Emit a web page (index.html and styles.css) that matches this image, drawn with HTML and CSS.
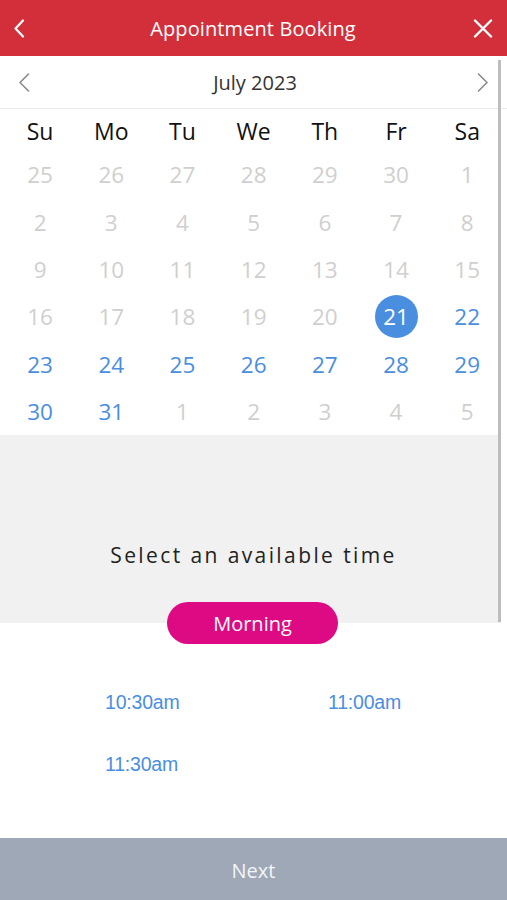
FILE: index.html
```html
<!DOCTYPE html>
<html lang="en">
<head>
<meta charset="utf-8">
<title>Appointment Booking</title>
<link rel="stylesheet" href="styles.css">
</head>
<body>
<div class="app">
  <header class="topbar">
    <button class="icon-btn back" aria-label="Back">
      <svg width="12" height="19" viewBox="0 0 12 19"><path d="M10 1.5 L2.5 9.5 L10 17.5" fill="none" stroke="#fff" stroke-width="2.2" stroke-linecap="round" stroke-linejoin="round"/></svg>
    </button>
    <h1 class="title">Appointment Booking</h1>
    <button class="icon-btn close" aria-label="Close">
      <svg width="20" height="19" viewBox="0 0 20 19"><path d="M2 1.5 L18 17.5 M18 1.5 L2 17.5" fill="none" stroke="#fff" stroke-width="2.4" stroke-linecap="round"/></svg>
    </button>
  </header>

  <div class="scroll-area">
    <section class="calendar">
      <div class="month-row">
        <span class="nav prev">
          <svg width="12" height="19" viewBox="0 0 12 19"><path d="M10.5 1 L2 9.5 L10.5 18" fill="none" stroke="#8a8a8a" stroke-width="1.6" stroke-linecap="round" stroke-linejoin="round"/></svg>
        </span>
        <span class="month">July 2023</span>
        <span class="nav next-m">
          <svg width="12" height="19" viewBox="0 0 12 19"><path d="M1.5 1 L10 9.5 L1.5 18" fill="none" stroke="#8a8a8a" stroke-width="1.6" stroke-linecap="round" stroke-linejoin="round"/></svg>
        </span>
      </div>
      <div class="grid weekdays">
        <span>Su</span><span>Mo</span><span>Tu</span><span>We</span><span>Th</span><span>Fr</span><span>Sa</span>
      </div>
      <div class="grid days">
        <span class="off">25</span><span class="off">26</span><span class="off">27</span><span class="off">28</span><span class="off">29</span><span class="off">30</span><span class="off">1</span>
        <span class="off">2</span><span class="off">3</span><span class="off">4</span><span class="off">5</span><span class="off">6</span><span class="off">7</span><span class="off">8</span>
        <span class="off">9</span><span class="off">10</span><span class="off">11</span><span class="off">12</span><span class="off">13</span><span class="off">14</span><span class="off">15</span>
        <span class="off">16</span><span class="off">17</span><span class="off">18</span><span class="off">19</span><span class="off">20</span><span class="on"><b class="sel">21</b></span><span class="on">22</span>
        <span class="on">23</span><span class="on">24</span><span class="on">25</span><span class="on">26</span><span class="on">27</span><span class="on">28</span><span class="on">29</span>
        <span class="on">30</span><span class="on">31</span><span class="off">1</span><span class="off">2</span><span class="off">3</span><span class="off">4</span><span class="off">5</span>
      </div>
    </section>
    <section class="prompt">
      <p>Select an available time</p>
    </section>
    <div class="scrollbar"></div>
  </div>

  <section class="times">
    <div class="pill-row"><span class="pill">Morning</span></div>
    <div class="slots">
      <a class="slot">10:30am</a>
      <a class="slot">11:00am</a>
      <a class="slot">11:30am</a>
    </div>
  </section>

  <footer class="next-bar">Next</footer>
</div>
</body>
</html>
```

FILE: styles.css
```css
* { box-sizing: border-box; }

html, body {
  margin: 0;
  padding: 0;
  background: #fff;
}

body {
  font-family: "Open Sans", "Noto Sans", sans-serif;
  width: 507px;
  height: 900px;
  overflow: hidden;
}

.app {
  display: flex;
  flex-direction: column;
  width: 507px;
  height: 900px;
}

.topbar {
  height: 56px;
  background: #d22f3b;
  display: flex;
  align-items: center;
  justify-content: space-between;
  padding: 0 14px 0 13px;
  flex: 0 0 56px;
}

.icon-btn {
  background: none;
  border: 0;
  padding: 0;
  display: flex;
  width: 24px;
  height: 24px;
  align-items: center;
  justify-content: center;
}
.icon-btn.back { justify-content: flex-start; }
.icon-btn.close { justify-content: flex-end; }

.title {
  margin: 0;
  font-size: 20px;
  font-weight: 400;
  color: #fff;
  letter-spacing: 0.1px;
}

.scroll-area {
  position: relative;
  display: flex;
  flex-direction: column;
  flex: 0 0 567px;
}

.scrollbar {
  position: absolute;
  top: 4px;
  bottom: 1px;
  right: 6px;
  width: 3px;
  background: #bdbdbd;
}

.calendar {
  background: #fff;
}

.month-row {
  height: 53px;
  display: flex;
  align-items: center;
  justify-content: space-between;
  padding: 0 18px 0 18px;
  border-bottom: 1px solid #ebebeb;
}

.nav { display: flex; width: 12px; }

.month {
  font-size: 20px;
  color: #333;
  margin-left: 3px;
}

.grid {
  display: grid;
  grid-template-columns: repeat(7, 71.2px);
  margin-left: 4.5px;
  text-align: center;
}

.weekdays {
  height: 43px;
  align-items: center;
  font-size: 23px;
  color: #111;
  padding-top: 1px;
}

.days {
  grid-auto-rows: 47.4px;
  align-items: center;
  font-size: 22.5px;
  margin-top: -1px;
}

.days span {
  display: flex;
  align-items: center;
  justify-content: center;
  height: 100%;
}

.off { color: #cfcfcf; }
.on { color: #4a8ee0; }

.sel {
  font-weight: 400;
  display: flex;
  align-items: center;
  justify-content: center;
  width: 43px;
  height: 43px;
  border-radius: 50%;
  background: #4a8ee0;
  color: #fff;
}

.prompt {
  flex: 1;
  background: #f1f1f1;
  padding-top: 105px;
  margin-right: 6px;
}

.prompt p {
  margin: 0;
  text-align: center;
  font-size: 21px;
  letter-spacing: 2.4px;
  color: #222;
  line-height: 30px;
  padding-left: 6px;
}

.times {
  flex: 1;
  background: #fff;
}

.pill-row {
  display: flex;
  justify-content: center;
  margin-top: -21px;
  padding-right: 2px;
}

.pill {
  position: relative;
  z-index: 1;
  display: flex;
  align-items: center;
  justify-content: center;
  width: 171px;
  height: 42px;
  border-radius: 21px;
  background: #dd0a83;
  color: #fff;
  font-size: 20px;
}

.slots {
  display: grid;
  grid-template-columns: 223px 1fr;
  grid-auto-rows: 62px;
  padding-left: 105px;
  margin-top: 43px;
}

.slot {
  font-family: "Liberation Sans", Arial, sans-serif;
  font-size: 19.5px;
  color: #4a8ee0;
  line-height: 30px;
  letter-spacing: -0.2px;
}

.next-bar {
  flex: 0 0 62px;
  background: #9ea8b7;
  color: #f4f5f7;
  font-size: 20px;
  display: flex;
  align-items: center;
  justify-content: center;
  padding-top: 2px;
}
```
